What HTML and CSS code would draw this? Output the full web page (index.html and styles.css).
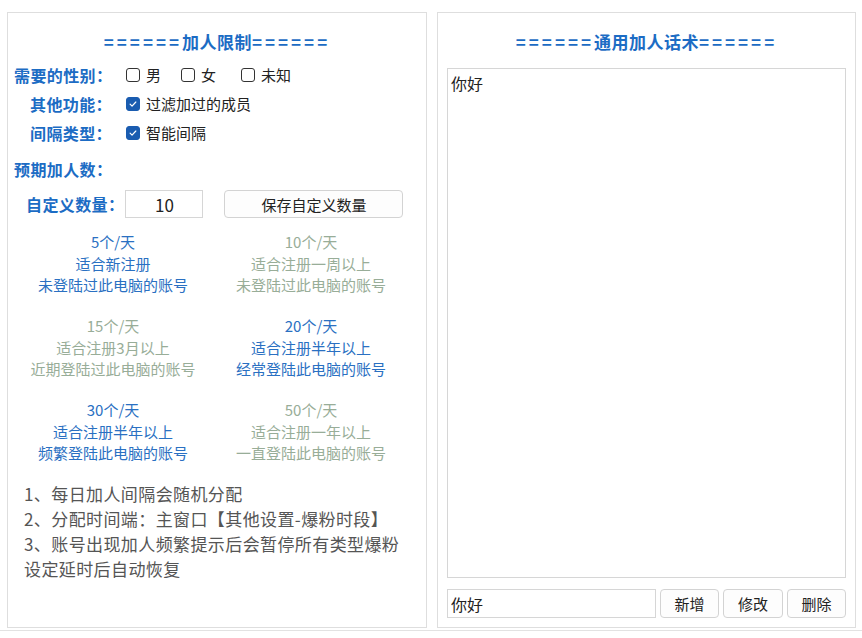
FILE: index.html
```html
<!DOCTYPE html>
<html lang="zh-CN">

<head>
  <meta charset="UTF-8">
  <title>加人设置</title>
  <link rel="stylesheet" href="styles.css">
</head>

<body>
  <div class="app">
    <section class="panel panel-left">
      <h2 class="title"><span class="eq">======</span>加人限制<span class="eq">======</span></h2>
      <div class="field">
        <span class="label">需要的性别：</span>
        <label class="opt"><span class="box"></span>男</label>
        <label class="opt opt-wide"><span class="box"></span>女</label>
        <label class="opt"><span class="box"></span>未知</label>
      </div>
      <div class="field">
        <span class="label">其他功能：</span>
        <label class="opt"><span class="box checked"><svg viewBox="0 0 14 14"><path d="M3.6 7.1l2.3 2.3 4.4-4.7" /></svg></span>过滤加过的成员</label>
      </div>
      <div class="field">
        <span class="label">间隔类型：</span>
        <label class="opt"><span class="box checked"><svg viewBox="0 0 14 14"><path d="M3.6 7.1l2.3 2.3 4.4-4.7" /></svg></span>智能间隔</label>
      </div>
      <div class="field field-head">
        <span class="label">预期加人数：</span>
      </div>
      <div class="custom">
        <span class="label">自定义数量：</span>
        <input class="num" type="text" value="10">
        <button class="btn btn-save">保存自定义数量</button>
      </div>
      <div class="rates">
        <div class="rate on">
          <div>5个/天</div>
          <div>适合新注册</div>
          <div>未登陆过此电脑的账号</div>
        </div>
        <div class="rate">
          <div>10个/天</div>
          <div>适合注册一周以上</div>
          <div>未登陆过此电脑的账号</div>
        </div>
        <div class="rate">
          <div>15个/天</div>
          <div>适合注册3月以上</div>
          <div>近期登陆过此电脑的账号</div>
        </div>
        <div class="rate on">
          <div>20个/天</div>
          <div>适合注册半年以上</div>
          <div>经常登陆此电脑的账号</div>
        </div>
        <div class="rate on">
          <div>30个/天</div>
          <div>适合注册半年以上</div>
          <div>频繁登陆此电脑的账号</div>
        </div>
        <div class="rate">
          <div>50个/天</div>
          <div>适合注册一年以上</div>
          <div>一直登陆此电脑的账号</div>
        </div>
      </div>
      <div class="notes">
        <p>1、每日加人间隔会随机分配</p>
        <p>2、分配时间端：主窗口【其他设置-爆粉时段】</p>
        <p>3、账号出现加人频繁提示后会暂停所有类型爆粉</p>
        <p>设定延时后自动恢复</p>
      </div>
    </section>

    <section class="panel panel-right">
      <h2 class="title"><span class="eq">======</span>通用加人话术<span class="eq">======</span></h2>
      <textarea class="script">你好</textarea>
      <div class="edit-row">
        <input class="phrase" type="text" value="你好">
        <button class="btn">新增</button>
        <button class="btn btn-mid">修改</button>
        <button class="btn">删除</button>
      </div>
    </section>
  </div>
  <div class="baseline"></div>
</body>

</html>
```

FILE: styles.css
```css
html,
body {
  margin: 0;
  padding: 0;
  background: #fff;
  font-family: "Noto Sans CJK SC", "Liberation Sans", sans-serif;
  color: #222;
}

.app {
  display: flex;
  gap: 10px;
  padding: 12px 0 0 7px;
}

.panel {
  box-sizing: border-box;
  height: 616px;
  border: 1px solid #dedede;
}

.panel-left {
  width: 420px;
  padding: 19px 6px 0;
}

.panel-right {
  width: 419px;
  padding: 19px 9px 0;
}

.title {
  margin: 0 0 8px;
  height: 20px;
  line-height: 20px;
  text-align: center;
  font-size: 17px;
  font-weight: bold;
  color: #1c6cc4;
  letter-spacing: 0.5px;
}

.title .eq {
  letter-spacing: 3px;
}

.panel-right .title {
  margin-bottom: 16px;
}

/* 表单行 */
.field {
  display: flex;
  align-items: center;
  height: 29px;
}

.label {
  font-size: 16px;
  font-weight: bold;
  color: #1c6cc4;
  letter-spacing: 0.4px;
  white-space: nowrap;
}

.field .label {
  width: 98px;
  margin-right: 14px;
  text-align: right;
}

.field-head {
  margin-top: 7px;
}

.field-head .label {
  text-align: left;
}

.opt {
  display: flex;
  align-items: center;
  font-size: 15px;
  margin-right: 20px;
}

.opt-wide {
  margin-right: 25px;
}

.box {
  box-sizing: border-box;
  width: 14px;
  height: 14px;
  margin-right: 6px;
  border: 1px solid #333;
  border-radius: 3px;
  background: #fff;
}

.box.checked {
  border-color: #1a5cb0;
  background: #1a5cb0;
}

.box svg {
  display: block;
  width: 12px;
  height: 12px;
  fill: none;
  stroke: #fff;
  stroke-width: 1.4;
  stroke-linecap: round;
  stroke-linejoin: round;
}

/* 自定义数量 */
.custom {
  display: flex;
  align-items: center;
  margin-top: 7px;
  padding-left: 12px;
  height: 28px;
}

.num {
  box-sizing: border-box;
  width: 78px;
  height: 28px;
  margin: 0 21px 0 1px;
  border: 1px solid #d6d6d6;
  text-align: center;
  font-family: inherit;
  font-size: 17px;
  color: #222;
  padding: 0;
}

.btn {
  box-sizing: border-box;
  height: 29px;
  width: 59px;
  border: 1px solid #d3d3d3;
  border-radius: 4px;
  background: #fdfdfd;
  font-family: inherit;
  font-size: 15px;
  color: #222;
  padding: 0;
}

.btn-save {
  width: 179px;
  height: 28px;
}

.btn-mid {
  width: 60px;
}

/* 速度选项 */
.rates {
  display: grid;
  grid-template-columns: 198px 198px;
  row-gap: 19.5px;
  margin-top: 13px;
}

.rate {
  text-align: center;
  font-size: 15px;
  line-height: 21.5px;
  color: #98ad98;
}

.rate.on {
  color: #2a70c2;
}

.notes {
  margin-top: 17px;
  padding-left: 10px;
  font-size: 17px;
  line-height: 25px;
  letter-spacing: 0.4px;
  color: #555;
}

.notes p {
  margin: 0;
  white-space: nowrap;
}

/* 话术 */
.script {
  display: block;
  box-sizing: border-box;
  width: 100%;
  height: 510px;
  margin: 0;
  padding: 4px 3px;
  border: 1px solid #d6d6d6;
  resize: none;
  font-family: inherit;
  font-size: 16px;
  line-height: 20px;
  color: #222;
}

.edit-row {
  display: flex;
  gap: 4px;
  margin-top: 11px;
}

.phrase {
  box-sizing: border-box;
  width: 209px;
  height: 29px;
  margin: 0;
  padding: 0 3px;
  border: 1px solid #d6d6d6;
  font-family: inherit;
  font-size: 16px;
  color: #222;
}

.baseline {
  margin-top: 2px;
  border-top: 1px solid #e2e2e2;
}
```
